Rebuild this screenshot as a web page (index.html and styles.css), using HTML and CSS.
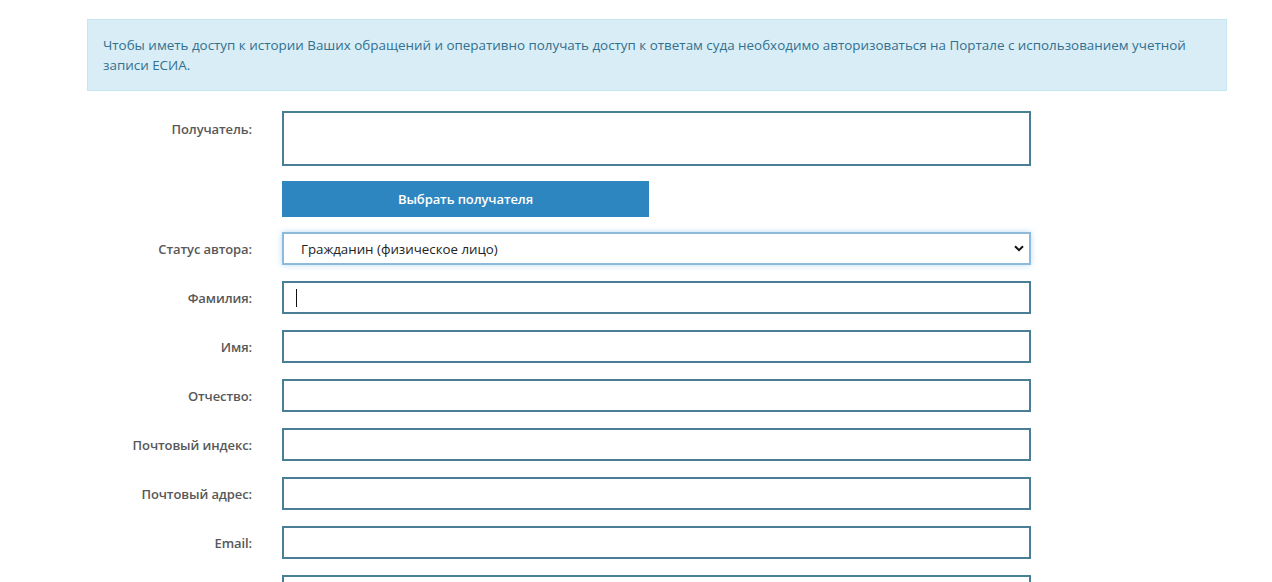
FILE: index.html
```html
<!DOCTYPE html>
<html lang="ru">
<head>
<meta charset="utf-8">
<link rel="stylesheet" href="styles.css">
</head>
<body>
<div class="page">
  <div class="alert">Чтобы иметь доступ к истории Ваших обращений и оперативно получать доступ к ответам суда необходимо авторизоваться на Портале с использованием учетной записи ЕСИА.</div>
  <form class="form">
    <label class="label label-top">Получатель:</label>
    <div class="field"><div class="box tall"></div></div>

    <div class="label"></div>
    <div class="field"><button type="button" class="btn">Выбрать получателя</button></div>

    <label class="label">Статус автора:</label>
    <div class="field">
      <div class="select">
        <span>Гражданин (физическое лицо)</span>
        <svg class="chev" width="10" height="7" viewBox="0 0 10 7"><path d="M1 1.2 L5 5.2 L9 1.2" fill="none" stroke="#111" stroke-width="2"/></svg>
      </div>
    </div>

    <label class="label">Фамилия:</label>
    <div class="field"><div class="box"><span class="caret"></span></div></div>

    <label class="label">Имя:</label>
    <div class="field"><div class="box"></div></div>

    <label class="label">Отчество:</label>
    <div class="field"><div class="box"></div></div>

    <label class="label">Почтовый индекс:</label>
    <div class="field"><div class="box"></div></div>

    <label class="label">Почтовый адрес:</label>
    <div class="field"><div class="box"></div></div>

    <label class="label">Email:</label>
    <div class="field"><div class="box"></div></div>

    <label class="label"></label>
    <div class="field"><div class="box"></div></div>
  </form>
</div>
</body>
</html>
```

FILE: styles.css
```css
html, body {
  margin: 0;
  padding: 0;
  background: #fff;
  overflow: hidden;
  height: 582px;
}
.page {
  margin-left: 87px;
  width: 1140px;
  padding-top: 19px;
  font-family: "Open Sans", "DejaVu Sans", sans-serif;
}
.alert {
  box-sizing: border-box;
  background: #d9edf7;
  border: 1px solid #c4e6f1;
  color: #31708f;
  font-size: 13.4px;
  line-height: 20px;
  padding: 15px 30px 15px 15px;
  height: 72px;
}
.form {
  display: grid;
  grid-template-columns: 165px 749px;
  column-gap: 30px;
  row-gap: 16px;
  margin-top: 20px;
}
.label {
  font-size: 13px;
  font-weight: 600;
  color: #585858;
  text-align: right;
  display: flex;
  align-items: center;
  justify-content: flex-end;
  letter-spacing: -0.1px;
}
.label-top {
  align-items: flex-start;
  padding-top: 9px;
}
.field {
  display: flex;
}
.box {
  box-sizing: border-box;
  width: 749px;
  height: 33px;
  border: 2px solid #4a7e95;
  background: #fff;
  display: flex;
  align-items: center;
  padding-left: 12px;
}
.box.tall {
  height: 55px;
}
.caret {
  width: 1px;
  height: 18px;
  background: #111;
}
.btn {
  width: 367px;
  height: 36px;
  background: #2e86c1;
  border: none;
  color: #fff;
  font-family: "Open Sans", "DejaVu Sans", sans-serif;
  font-size: 13px;
  font-weight: 600;
  letter-spacing: -0.1px;
  padding: 0;
  margin-top: -1px;
  margin-bottom: -1px;
}
.select {
  box-sizing: border-box;
  width: 749px;
  height: 33px;
  border: 2px solid #8dbadb;
  box-shadow: 0 0 6px rgba(102, 175, 233, 0.45);
  background: #fff;
  display: flex;
  align-items: center;
  justify-content: space-between;
  padding: 0 5px 0 17px;
  font-size: 13.3px;
  color: #222;
}
.chev {
  display: block;
}
```
